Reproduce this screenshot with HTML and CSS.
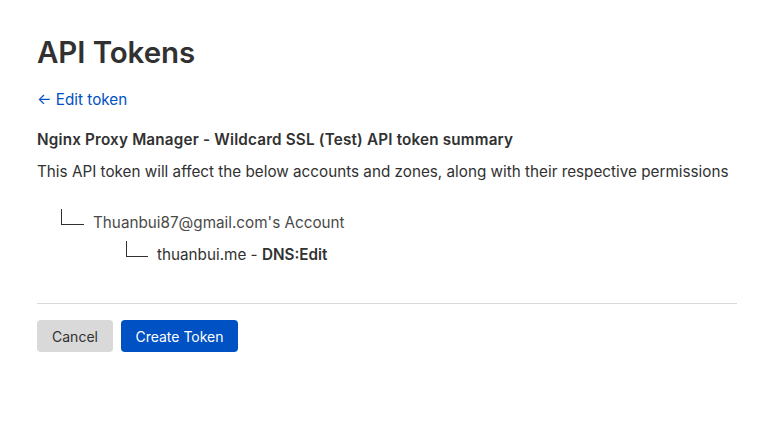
FILE: index.html
```html
<!DOCTYPE html>
<html>
<head>
<meta charset="utf-8">
<link rel="stylesheet" href="styles.css">
</head>
<body>
<main class="page">
  <h1 class="title">API Tokens</h1>
  <a class="back" href="#"><span class="arrow">←</span> Edit token</a>
  <h2 class="summary">Nginx Proxy Manager - Wildcard SSL (Test) API token summary</h2>
  <p class="desc">This API token will affect the below accounts and zones, along with their respective permissions</p>
  <div class="tree">
    <div class="node level1"><span class="branch"></span><span>Thuanbui87@gmail.com's Account</span></div>
    <div class="node level2"><span class="branch"></span><span>thuanbui.me - <strong>DNS:Edit</strong></span></div>
  </div>
  <hr class="divider">
  <div class="actions">
    <button class="btn btn-cancel">Cancel</button>
    <button class="btn btn-primary">Create Token</button>
  </div>
</main>
</body>
</html>
```
FILE: styles.css
```css
* { box-sizing: border-box; }
html, body { margin: 0; padding: 0; background: #fff; }
body {
  font-family: Inter, "Noto Sans", sans-serif;
  color: #313131;
  font-size: 15.25px;
}
.page {
  padding: 32px 38px 0 37px;
  width: 775px;
}
.title {
  margin: 0;
  font-size: 29.5px;
  font-weight: 600;
  line-height: 40px;
  color: #313131;
  letter-spacing: -0.1px;
}
.back {
  display: inline-block;
  margin-top: 18px;
  color: #0051c3;
  text-decoration: none;
  line-height: 20px;
}
.summary {
  margin: 19px 0 0;
  font-size: 15.25px;
  font-weight: 600;
  line-height: 22px;
  color: #313131;
  letter-spacing: 0.18px;
}
.desc {
  margin: 10px 0 0;
  line-height: 22px;
  color: #313131;
}
.tree {
  margin-top: 29px;
  display: flex;
  flex-direction: column;
  gap: 10px;
}
.node {
  display: flex;
  align-items: flex-start;
  height: 22px;
  line-height: 22px;
  color: #4a4a4a;
  white-space: nowrap;
}
.node strong { color: #313131; font-weight: 600; }
.level1 { padding-left: 24px; }
.level2 { padding-left: 89px; color: #313131; }
.branch {
  flex: none;
  width: 23px;
  height: 16px;
  margin-top: -3px;
  border-left: 1px solid #313131;
  border-bottom: 1px solid #313131;
  margin-right: 9px;
}
.level2 .branch { width: 22px; }
.divider {
  margin: 37px 0 0;
  border: 0;
  border-top: 1px solid #d9d9d9;
  width: 700px;
}
.actions {
  margin-top: 16px;
  display: flex;
  gap: 8px;
}
.btn {
  font-family: Inter, "Noto Sans", sans-serif;
  font-size: 14px;
  height: 32px;
  border: 0;
  border-radius: 4px;
  padding: 0;
  white-space: nowrap;
  cursor: pointer;
}
.btn-cancel { background: #d9d9d9; color: #313131; width: 76px; }
.btn-primary { background: #0051c3; color: #fff; width: 117px; }
```
